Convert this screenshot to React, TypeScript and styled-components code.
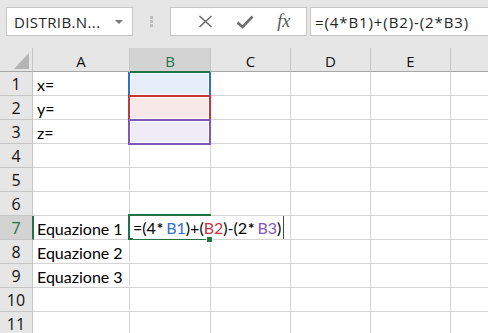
import React from 'react';
import styled, { createGlobalStyle } from 'styled-components';

const GlobalStyle = createGlobalStyle`
    body {
        margin: 0;
        background: #e6e6e6;
    }
`

const COLS = ['A', 'B', 'C', 'D', 'E', ''];
const ROWS = [1, 2, 3, 4, 5, 6, 7, 8, 9, 10, 11];

const CELL_TEXT: Record<string, string> = {
    A1: 'x=',
    A2: 'y=',
    A3: 'z=',
    A7: 'Equazione 1',
    A8: 'Equazione 2',
    A9: 'Equazione 3',
};

const REF_COLORS: Record<string, { border: string; fill: string }> = {
    B1: { border: '#2f6fcf', fill: '#e6eef9' },
    B2: { border: '#c7353d', fill: '#f9e8e8' },
    B3: { border: '#8157bd', fill: '#efebf7' },
};

interface IHighlight {
    active?: boolean;
}

interface IRef {
    border: string;
    fill: string;
}

const Window = styled.div`
    width: 488px;
    height: 333px;
    overflow: hidden;
    background: #e6e6e6;
    font-family: "Open Sans", "Liberation Sans", sans-serif;
`

const FormulaBar = styled.div`
    height: 48px;
    box-sizing: border-box;
    padding: 7px 0 0 6px;
    display: flex;
    align-items: flex-start;
`

const NameBox = styled.div`
    width: 127px;
    height: 29px;
    box-sizing: border-box;
    background: #fff;
    border: 1px solid #c6c6c6;
    display: flex;
    align-items: center;
    justify-content: space-between;
    padding: 0 9px 0 7px;
    font-size: 15px;
    color: #262626;
    letter-spacing: 0.4px;
`

const DropArrow = styled.span`
    width: 0;
    height: 0;
    border-left: 4px solid transparent;
    border-right: 4px solid transparent;
    border-top: 4px solid #777;
    margin-top: 1px;
`

const Grip = styled.div`
    width: 37px;
    height: 29px;
    display: flex;
    flex-direction: column;
    align-items: center;
    justify-content: center;
    gap: 1px;
`

const GripDot = styled.span`
    width: 3px;
    height: 3px;
    background: #bcbcbc;
`

const ActionBox = styled.div`
    width: 137px;
    height: 29px;
    box-sizing: border-box;
    background: #fff;
    border: 1px solid #c6c6c6;
    display: flex;
    align-items: center;
    padding-left: 14px;
`

const ActionSlot = styled.div`
    width: 46px;
    height: 27px;
    display: flex;
    align-items: center;
    justify-content: center;
`

const Fx = styled.span`
    font-family: "Liberation Serif", "DejaVu Serif", serif;
    font-style: italic;
    font-size: 18px;
    color: #555;
    margin-left: -4px;
`

const FormulaInput = styled.div`
    flex: 1;
    margin-left: 3px;
    height: 29px;
    box-sizing: border-box;
    background: #fff;
    border: 1px solid #c6c6c6;
    border-right: none;
    display: flex;
    align-items: center;
    padding-left: 4px;
    font-size: 15px;
    letter-spacing: 0.9px;
    color: #262626;
    white-space: nowrap;
`

const Sheet = styled.div`
    display: grid;
    grid-template-columns: 33px 97px 81px 80px 80px 80px 60px;
    grid-auto-rows: 24px;
    background: #fff;
`

const Corner = styled.div`
    background: #e6e6e6;
    border-right: 1px solid #c6c6c6;
    border-bottom: 1px solid #a6a6a6;
    display: flex;
    align-items: flex-end;
    justify-content: flex-end;
    padding: 0 3px 2px 0;
`

const ColHead = styled.div<IHighlight>`
    background: ${({active}) => active ? '#d3d3d3' : '#e6e6e6'};
    color: ${({active}) => active ? '#217346' : '#111'};
    border-right: 1px solid #c6c6c6;
    border-bottom: ${({active}) => active ? '2px solid #217346' : '1px solid #a6a6a6'};
    margin-bottom: ${({active}) => active ? '-1px' : '0'};
    display: flex;
    align-items: center;
    justify-content: center;
    font-size: 15px;
    padding-top: 2px;
    position: relative;
    z-index: 2;
`

const RowHead = styled.div<IHighlight>`
    background: ${({active}) => active ? '#d3d3d3' : '#e6e6e6'};
    color: ${({active}) => active ? '#217346' : '#111'};
    border-right: ${({active}) => active ? '2px solid #217346' : '1px solid #c6c6c6'};
    margin-right: ${({active}) => active ? '-1px' : '0'};
    border-bottom: 1px solid #c6c6c6;
    display: flex;
    align-items: center;
    justify-content: center;
    font-size: 16px;
    padding-top: 1px;
    position: relative;
    z-index: 2;
`

const Cell = styled.div`
    border-right: 1px solid #d4d4d4;
    border-bottom: 1px solid #d4d4d4;
    display: flex;
    align-items: center;
    padding: 1px 0 0 4px;
    font-family: Lato, "Open Sans", sans-serif;
    font-size: 16px;
    color: #000;
    white-space: nowrap;
    position: relative;
`

const RefCell = styled.div<IRef>`
    border-right: 1px solid #d4d4d4;
    border-bottom: 1px solid #d4d4d4;
    position: relative;
    background: ${({fill}) => fill};

    &::after {
        content: '';
        position: absolute;
        left: -2px;
        top: -1px;
        right: -1px;
        bottom: -2px;
        border: 2px solid ${({border}) => border};
        box-shadow: inset 0 0 0 1px #fff;
        z-index: 1;
    }
`

const EditCell = styled.div`
    position: relative;
    border-bottom: 1px solid #d4d4d4;
    border-right: 1px solid #d4d4d4;
    z-index: 3;

    &::before {
        content: '';
        position: absolute;
        left: -2px;
        top: -2px;
        right: -1px;
        bottom: -1px;
        border: 2px solid #217346;
        pointer-events: none;
    }
`

const FillHandle = styled.span`
    position: absolute;
    right: -3px;
    bottom: -4px;
    width: 5px;
    height: 5px;
    background: #217346;
    border: 1px solid #fff;
    z-index: 2;
`

const EditText = styled.div`
    position: absolute;
    left: 3px;
    top: 0;
    height: 23px;
    padding-right: 2px;
    background: #fff;
    display: flex;
    align-items: center;
    font-family: Lato, "Open Sans", sans-serif;
    font-size: 16px;
    color: #000;
    white-space: nowrap;
    border-right: 1px solid #444;
`

const Ref = styled.span<{ color: string }>`
    color: ${({color}) => color};
`

const Star = styled.span`
    font-size: 15px;
    font-weight: 700;
    vertical-align: 3px;
    margin: 0 3px 0 1px;
`

const CloseIcon = () => (
    <svg width="15" height="13" viewBox="0 0 15 13">
        <path d="M1.5 1 L13.5 12 M13.5 1 L1.5 12" stroke="#6d6d6d" strokeWidth="1.6" fill="none" />
    </svg>
);

const CheckIcon = () => (
    <svg width="18" height="14" viewBox="0 0 18 14">
        <path d="M1.5 7.5 L6.5 12 L16.5 1.5" stroke="#6d6d6d" strokeWidth="2.6" fill="none" />
    </svg>
);

const CornerTriangle = () => (
    <svg width="15" height="16" viewBox="0 0 15 16">
        <polygon points="15,0 15,16 0,16" fill="#b4b4b4" />
    </svg>
);

const App = () => {
    const renderCell = (col: string, row: number) => {
        const id = `${col}${row}`;
        if (REF_COLORS[id]) {
            return <RefCell key={id} border={REF_COLORS[id].border} fill={REF_COLORS[id].fill} />;
        }
        if (id === 'B7') {
            return (
                <EditCell key={id}>
                    <EditText>
                        =(4<Star>*</Star><Ref color="#2f6fcf">B1</Ref>)+(<Ref color="#c7353d">B2</Ref>)-(2<Star>*</Star><Ref color="#8157bd">B3</Ref>)
                    </EditText>
                    <FillHandle />
                </EditCell>
            );
        }
        return <Cell key={id}>{CELL_TEXT[id] || ''}</Cell>;
    };

    return (
        <>
            <GlobalStyle />
            <Window>
                <FormulaBar>
                    <NameBox>
                        DISTRIB.N...
                        <DropArrow />
                    </NameBox>
                    <Grip>
                        <GripDot />
                        <GripDot />
                        <GripDot />
                    </Grip>
                    <ActionBox>
                        <ActionSlot><CloseIcon /></ActionSlot>
                        <ActionSlot><CheckIcon /></ActionSlot>
                        <ActionSlot><Fx>fx</Fx></ActionSlot>
                    </ActionBox>
                    <FormulaInput>=(4*B1)+(B2)-(2*B3)</FormulaInput>
                </FormulaBar>
                <Sheet>
                    <Corner><CornerTriangle /></Corner>
                    {COLS.map((col) => (
                        <ColHead key={`h${col}`} active={col === 'B'}>{col}</ColHead>
                    ))}
                    {ROWS.map((row) => (
                        <React.Fragment key={row}>
                            <RowHead active={row === 7}>{row}</RowHead>
                            {COLS.map((col) => renderCell(col || 'F', row))}
                        </React.Fragment>
                    ))}
                </Sheet>
            </Window>
        </>
    );
};

export default App;
